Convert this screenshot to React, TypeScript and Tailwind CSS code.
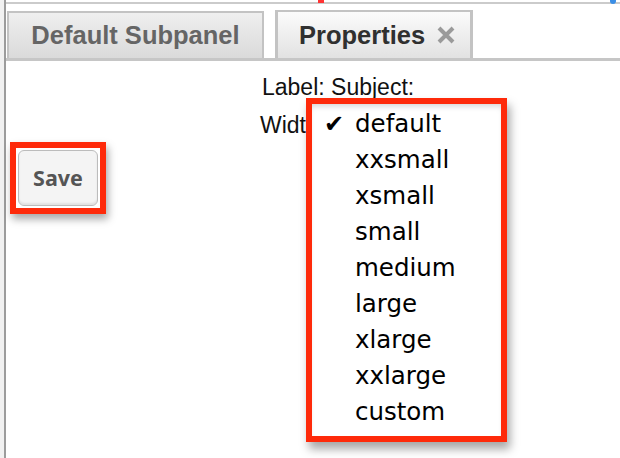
import React from "react";

const SIZES = ["default", "xxsmall", "xsmall", "small", "medium", "large", "xlarge", "xxlarge", "custom"];

function CloseX() {
  return (
    <svg width="20" height="20" viewBox="0 0 20 20" className="shrink-0">
      <path d="M3 3 L17 17 M17 3 L3 17" stroke="#9a9a9a" strokeWidth="4" strokeLinecap="butt" />
    </svg>
  );
}

function WidthMenu() {
  return (
    <div className="absolute left-[306px] top-[98px] h-[344px] w-[201px] border-[6px] border-[#fe2a0a] bg-white shadow-[3px_7px_9px_rgba(0,0,0,0.35)]">
      <div className="h-full pt-[2px] font-['DejaVu_Sans',sans-serif] text-[24.5px] leading-[36px] text-black shadow-[inset_0_5px_6px_-3px_rgba(0,0,0,0.18)]">
        {SIZES.map((s, i) => (
          <div key={s} className="flex items-center">
            <span className="w-[43px] pl-[12px] text-[24px] leading-[36px]">{i === 0 ? "✔" : ""}</span>
            <span>{s}</span>
          </div>
        ))}
      </div>
    </div>
  );
}

export default function App() {
  return (
    <div className="relative flex h-[458px] w-[620px] overflow-hidden bg-white font-['Liberation_Sans',Arial,sans-serif]">
      <div className="w-[4px] bg-[#f1f1f1]" />
      <div className="flex-1 border-l-2 border-[#9c9c9c] pt-[2px]">
        <div className="border-t-2 border-[#cbcbcb] pt-[6px]">
          <div className="flex items-end gap-[11px] border-b-[3px] border-[#c6c6c6] pl-[1px]">
            <div className="flex h-[47px] w-[257px] items-center justify-center border-x-2 border-t-2 border-[#c3c3c3] bg-gradient-to-b from-[#efefef] to-[#dadada] text-[25.5px] font-bold text-[#656565]">
              Default Subpanel
            </div>
            <div className="flex h-[48px] w-[198px] items-center gap-[11px] border-x-[3px] border-t-2 border-[#c3c3c3] bg-gradient-to-b from-[#fbfbfb] to-[#e2e2e2] pl-[21px] text-[25.5px] font-bold text-[#303030]">
              <span>Properties</span>
              <CloseX />
            </div>
          </div>
        </div>

        <div className="flex">
          <div className="w-[250px] pl-[4px] pt-[81px]">
            <div className="inline-flex border-[6px] border-[#fe2a0a] p-[2px] shadow-[2px_5px_8px_rgba(0,0,0,0.35)]">
              <button className="flex h-[56px] w-[80px] items-center justify-center rounded-[6px] border border-[#bcbcbc] bg-[#f4f4f4] font-['Noto_Sans',sans-serif] text-[21.5px] font-bold text-[#555] shadow-[inset_0_-2px_2px_rgba(0,0,0,0.08)]">
                Save
              </button>
            </div>
          </div>
          <div className="pl-[6px] pt-[12px] text-[23px] leading-[28px] text-[#111]">
            <div>Label: Subject:</div>
            <div className="-ml-[2px] mt-[10px]">Width:</div>
          </div>
        </div>
      </div>

      <span className="absolute left-[318px] top-0 h-[3px] w-[6px] bg-[#f33]" />
      <span className="absolute left-[610px] top-0 h-[4px] w-[6px] rounded-b bg-[#3a8ee6]" />

      <WidthMenu />
    </div>
  );
}
